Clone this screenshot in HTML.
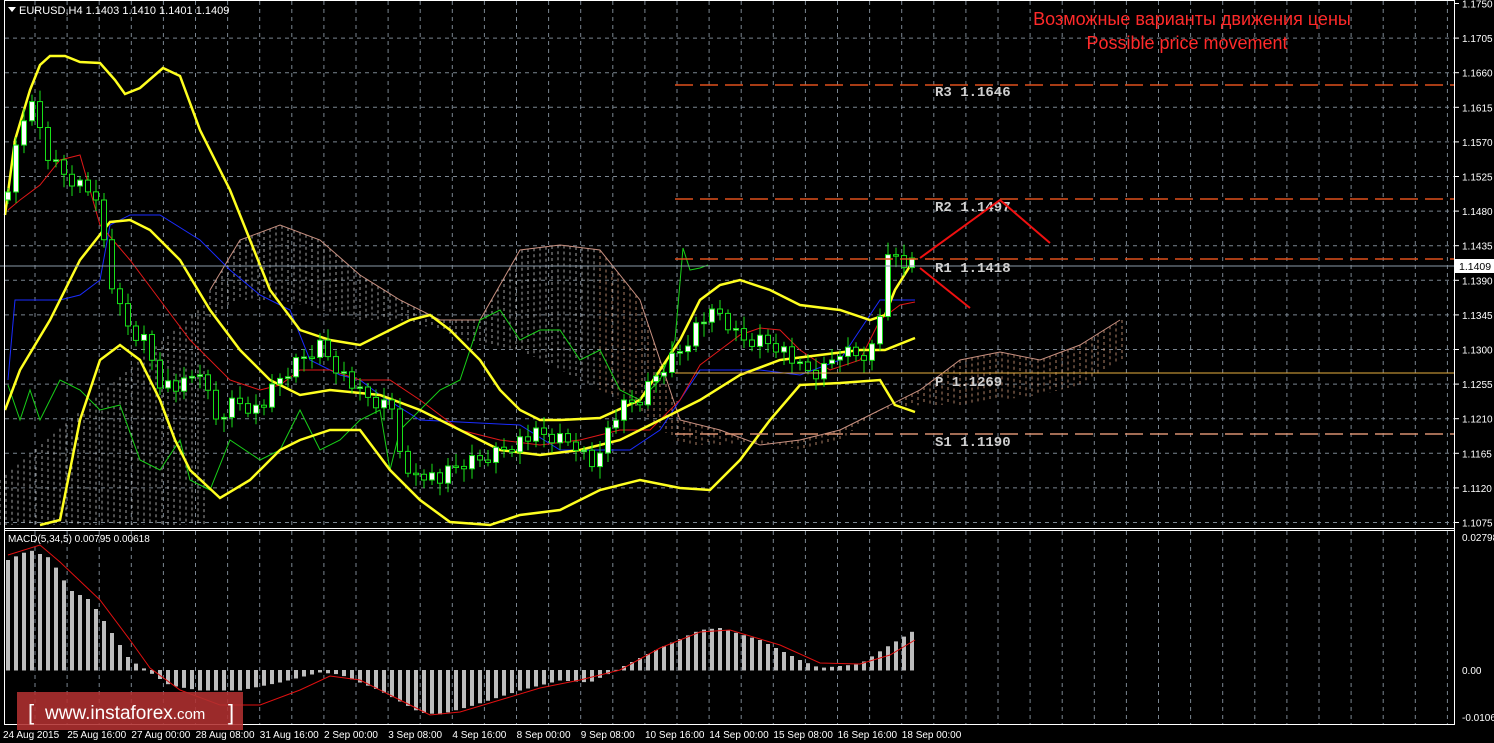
<!DOCTYPE html>
<html><head><meta charset="utf-8"><style>
html,body{margin:0;padding:0;background:#000;width:1494px;height:743px;overflow:hidden}
svg{display:block}
text{font-family:"Liberation Sans",sans-serif}
text.mono{font-family:"Liberation Mono",monospace}
</style></head><body>
<svg id="s" width="1494" height="743" xmlns="http://www.w3.org/2000/svg">
<rect width="1494" height="743" fill="#000"/>
<g id="grid"></g>
<g id="cloud"></g>
<g id="lines"></g>
<g id="candles"></g>
<g id="macd"></g>
<line x1="675" y1="85" x2="1454" y2="85" stroke="#e0501c" stroke-width="1.5" stroke-dasharray="18,7"/>
<line x1="675" y1="199" x2="1454" y2="199" stroke="#e0501c" stroke-width="1.5" stroke-dasharray="18,7"/>
<line x1="675" y1="259" x2="1454" y2="259" stroke="#e0501c" stroke-width="1.5" stroke-dasharray="18,7"/>
<line x1="675" y1="373" x2="1454" y2="373" stroke="#e8b040" stroke-width="1"/>
<line x1="675" y1="434" x2="1454" y2="434" stroke="#d89070" stroke-width="1.5" stroke-dasharray="18,7"/>
<line x1="0" y1="266" x2="1454" y2="266" stroke="#8a9aa8" stroke-width="1"/>
<g font-weight="bold" font-size="14" fill="#cfcfcf">
<text class="mono" x="935" y="96">R3 1.1646</text>
<text class="mono" x="935" y="211">R2 1.1497</text>
<text class="mono" x="935" y="272">R1 1.1418</text>
<text class="mono" x="935" y="386">P 1.1269</text>
<text class="mono" x="935" y="446">S1 1.1190</text>
</g>
<polyline points="920,258 1000,200 1050,243" fill="none" stroke="#f01010" stroke-width="2"/>
<line x1="920" y1="268" x2="970" y2="308" stroke="#f01010" stroke-width="2"/>
<text x="1192" y="25" text-anchor="middle" font-size="18" fill="#ff2a2a">Возможные варианты движения цены</text>
<text x="1187" y="49" text-anchor="middle" font-size="18" fill="#ff2a2a">Possible price movement</text>
<rect x="4.5" y="0.5" width="1450" height="724" fill="none" stroke="#fff" stroke-width="1"/>
<line x1="4" y1="528.5" x2="1455" y2="528.5" stroke="#fff"/>
<line x1="4" y1="530.5" x2="1455" y2="530.5" stroke="#fff"/>
<polygon points="8,7 16,7 12,12" fill="#fff"/>
<text x="19" y="14" font-size="11" fill="#fff">EURUSD,H4  1.1403 1.1410 1.1401 1.1409</text>
<text x="8" y="542" font-size="10" fill="#fff">MACD(5,34,5) 0.00795 0.00618</text>
<g id="axis" font-size="10" fill="#fff"></g>
<rect x="1455" y="259" width="39" height="14" fill="#fff"/>
<text x="1459" y="270" font-size="10.5" fill="#000">1.1409</text>
<rect x="17" y="692" width="226" height="38" fill="#b03030" fill-opacity="0.88"/>
<text x="28" y="720" font-size="22" fill="#fff">[</text>
<text x="45" y="719" font-size="19" fill="#fff">www.instaforex<tspan font-size="15">.com</tspan></text>
<text x="228" y="720" font-size="22" fill="#fff">]</text>
</svg>
<script>
(function(){
var NS="http://www.w3.org/2000/svg";
function el(t,a,p){var e=document.createElementNS(NS,t);for(var k in a)e.setAttribute(k,a[k]);document.getElementById(p).appendChild(e);return e;}
function interp(pts,x){for(var i=0;i<pts.length-1;i++){if(x>=pts[i][0]&&x<=pts[i+1][0]){var t=(x-pts[i][0])/(pts[i+1][0]-pts[i][0]);return pts[i][1]+t*(pts[i+1][1]-pts[i][1]);}}return x<pts[0][0]?pts[0][1]:pts[pts.length-1][1];}
function pl(pts,c,w,p){el("polyline",{points:pts.map(function(q){return q.join(",")}).join(" "),fill:"none",stroke:c,"stroke-width":w},p||"lines");}
for(var x=35;x<1454;x+=32.1){el("line",{x1:x,y1:1,x2:x,y2:528,stroke:"#7a8590","stroke-dasharray":"4,4"},"grid");el("line",{x1:x,y1:531,x2:x,y2:724,stroke:"#7a8590","stroke-dasharray":"4,4"},"grid");}
var labs=["1.1750","1.1705","1.1660","1.1615","1.1570","1.1525","1.1480","1.1435","1.1390","1.1345","1.1300","1.1255","1.1210","1.1165","1.1120","1.1075"];
for(var i=0;i<labs.length;i++){var y=3.5+i*34.6;if(i>0)el("line",{x1:5,y1:y,x2:1454,y2:y,stroke:"#7a8590","stroke-dasharray":"4,4"},"grid");el("line",{x1:1455,y1:y,x2:1459,y2:y,stroke:"#fff"},"axis");var t=el("text",{x:1462,y:y+4},"axis");t.textContent=labs[i];}
[["0.02798",537],["0.00",670],["-0.0106",717]].forEach(function(a){var t=el("text",{x:1462,y:a[1]+4},"axis");t.textContent=a[0];});
var tl=["24 Aug 2015","25 Aug 16:00","27 Aug 00:00","28 Aug 08:00","31 Aug 16:00","2 Sep 00:00","3 Sep 08:00","4 Sep 16:00","8 Sep 00:00","9 Sep 08:00","10 Sep 16:00","14 Sep 00:00","15 Sep 08:00","16 Sep 16:00","18 Sep 00:00"];
tl.forEach(function(s,i){var t=el("text",{x:3+i*64.2,y:738},"axis");t.textContent=s;});
var P=[[8,200],[20,120],[35,105],[45,150],[60,170],[75,180],[90,190],[100,220],[115,300],[130,330],[145,340],[160,380],[180,390],[200,370],[215,420],[235,400],[260,410],[280,380],[300,360],[320,345],[340,370],[360,395],[380,405],[395,410],[405,480],[420,470],[440,480],[460,465],[480,460],[500,450],[520,440],[540,435],[560,440],[580,445],[590,470],[600,445],[620,410],[640,400],[660,370],[680,350],[700,320],[720,315],[740,340],[760,340],[780,345],[800,370],[820,375],[840,350],[860,355],[875,345],[890,250],[900,262],[915,265]];
var C1=[[210,290],[240,240],[280,225],[320,240],[360,275],[400,300],[440,320],[480,320],[520,250],[560,245],[600,250],[640,300],[680,420],[720,430],[760,445],[800,440],[840,430],[880,410],[920,390],[960,360],[1000,352],[1040,360],[1080,345],[1120,320]];
var C2=[[210,320],[240,300],[280,300],[320,310],[360,320],[400,320],[440,330],[480,345],[520,350],[560,370],[600,390],[640,410],[680,445],[720,445],[760,440],[800,450],[840,440],[880,410],[920,405],[960,405],[1000,400],[1040,395],[1080,385],[1120,360]];
for(var x=0;x<1125;x+=6){var a=interp(C1,x),b=interp(C2,x);if(x<210){a=480-(x/210)*180;b=525;}el("line",{x1:x,y1:Math.min(a,b),x2:x,y2:Math.max(a,b),stroke:x<600?"#c8c8c8":"#d8a080","stroke-width":1,"stroke-dasharray":"3,3","stroke-opacity":0.8},"cloud");}
pl(C1,"#c89080",1);
pl([[8,380],[15,300],[60,300],[80,295],[100,280],[110,225],[130,215],[160,215],[200,240],[230,270],[260,295],[290,310],[310,360],[340,375],[360,380],[380,395],[420,420],[520,425],[560,450],[630,450],[660,430],[700,370],[720,370],[760,370],[800,375],[840,360],[860,330],[880,300],[915,300]],"#1a2cff",1);
pl([[8,210],[20,200],[40,185],[60,160],[80,155],[100,225],[130,260],[160,300],[190,340],[230,380],[260,390],[280,385],[300,370],[330,370],[360,380],[390,380],[420,400],[460,430],[500,440],[540,445],[580,440],[620,430],[650,430],[680,400],[700,365],[720,350],[740,335],[760,328],[780,330],[800,350],[830,370],[860,360],[880,320],[900,305],[915,302]],"#e01818",1);
pl([[8,385],[20,420],[30,390],[40,420],[60,380],[80,390],[100,410],[120,405],[140,460],[160,470],[180,440],[190,480],[210,490],[230,440],[260,460],[280,450],[300,410],[320,450],[340,440],[360,420],[380,410],[390,470],[400,430],[420,410],[440,390],[460,380],[480,320],[500,310],[520,340],[540,330],[560,330],[580,360],[600,350],[620,390],[640,400],[660,380],[675,340],[683,248],[690,270],[700,268],[708,265]],"#18d018",1);
pl([[5,215],[15,140],[30,90],[40,65],[50,56],[65,56],[80,62],[100,63],[115,80],[125,94],[140,88],[163,68],[180,76],[200,130],[230,190],[250,240],[270,290],[300,330],[330,340],[360,345],[390,330],[410,320],[430,315],[450,330],[480,360],[500,390],[520,410],[540,420],[560,420],[600,418],[640,400],[680,340],[700,300],[720,285],[740,280],[770,290],[800,305],[840,310],[870,320],[885,315],[895,290],[915,258]],"#ffff20",2.5);
pl([[5,410],[20,370],[50,320],[80,260],[110,222],[130,220],[150,230],[180,260],[210,310],[240,350],[270,380],[300,395],[330,390],[380,395],[420,410],[460,430],[500,450],[540,455],[580,450],[620,440],[660,420],[700,400],[740,375],[780,360],[820,355],[860,350],[885,350],[915,338]],"#ffff20",2.5);
pl([[40,525],[60,520],[80,420],[100,360],[120,345],[140,360],[160,400],[175,440],[190,470],[220,498],[250,480],[280,450],[300,440],[330,430],[360,430],[390,470],[420,500],[450,522],[490,525],[520,515],[560,510],[600,490],[640,480],[680,488],[710,490],[740,460],[770,420],[800,385],[840,383],[880,380],[895,405],[915,412]],"#ffff20",2.5);
var prev=interp(P,8);
for(var i=0;i<114;i++){var x=8+i*8;var c=interp(P,x)+((i*37)%11-5)*1.6;var o=prev;prev=c;var bt=Math.min(o,c),bb=Math.max(o,c);if(bb-bt<1.5)bb=bt+1.5;var hi=bt-4-(i*13)%9,lo=bb+4+(i*7)%10;
el("line",{x1:x,y1:hi,x2:x,y2:lo,stroke:"#18e018"},"candles");
el("rect",{x:x-2.5,y:bt,width:5,height:bb-bt,fill:c<o?"#fff":"#000",stroke:"#18e018","stroke-width":1},"candles");}
var M=[[8,560],[30,550],[50,558],[70,590],[90,600],[110,630],[130,660],[150,672],[170,685],[200,690],[240,690],[280,682],[320,672],[340,674],[380,690],[420,712],[440,714],[470,706],[520,690],[560,680],[590,682],[620,668],[660,648],[700,630],[720,628],[760,640],[800,660],[820,668],[860,664],[890,645],[915,630]];
var S=[[8,555],[40,545],[60,562],[100,600],[130,640],[150,668],[180,690],[220,705],[260,705],[300,690],[330,676],[360,680],[400,700],[430,715],[460,712],[500,700],[540,688],[580,680],[620,670],[660,648],[700,632],[730,630],[780,645],[820,663],[860,664],[890,655],[915,640]];
for(var i=0;i<114;i++){var x=8+i*8;var v=interp(M,x);el("rect",{x:x-2,y:Math.min(v,670),width:4,height:Math.abs(v-670)+0.5,fill:"#bdbdbd"},"macd");}
pl(S,"#e01010",1,"macd");
})();
</script>
</body></html>
